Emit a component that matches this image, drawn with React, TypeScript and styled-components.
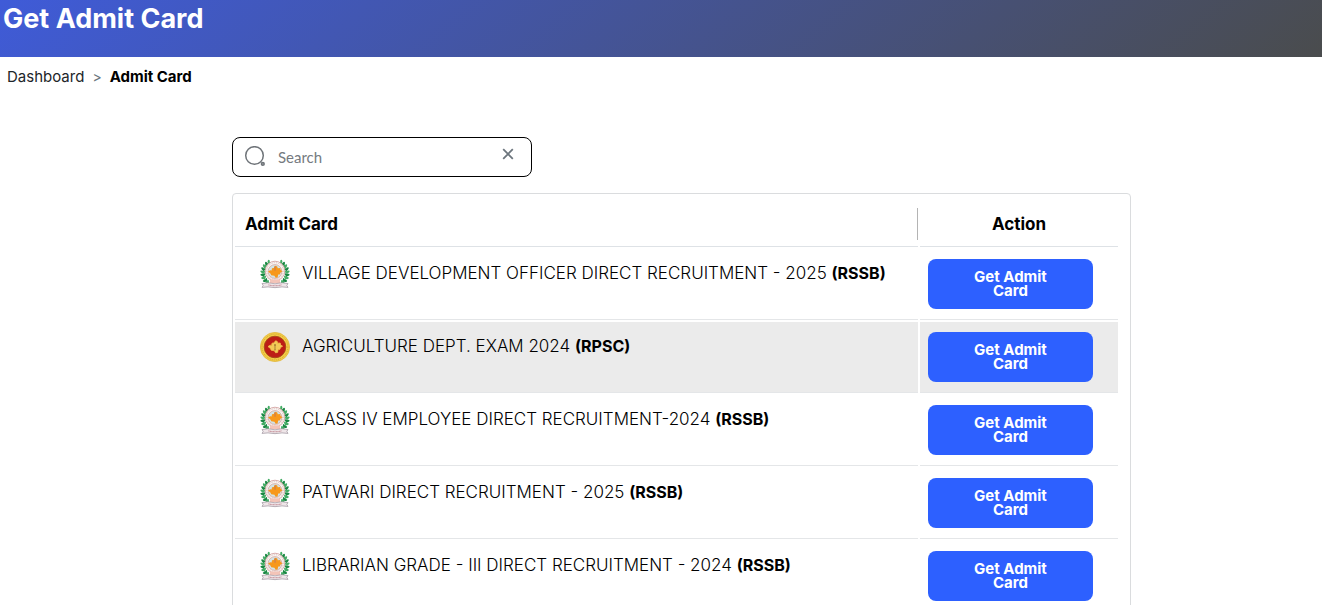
import React, { useState } from "react";
import styled, { createGlobalStyle } from "styled-components";

const GlobalStyle = createGlobalStyle`
  *, *::before, *::after { box-sizing: border-box; }
  html { scrollbar-width: none; }
  body {
    margin: 0;
    background: #fff;
    color: #000;
    font-family: Inter, "Open Sans", sans-serif;
    font-size: 17px;
  }
`;

const Banner = styled.header`
  height: 57px;
  padding: 4px 3px;
  background: linear-gradient(140deg, #3f5bd8 0%, #4a4c4d 100%);
`;

const Title = styled.h1`
  margin: 0;
  color: #fff;
  font-size: 27px;
  line-height: 30px;
  font-weight: 700;
`;

const Breadcrumb = styled.nav`
  display: flex;
  align-items: center;
  gap: 8px;
  padding: 10px 7px;
  font-size: 15px;
  line-height: 20px;
`;

const CrumbLink = styled.a`
  color: #212529;
  text-decoration: none;
`;

const CrumbCurrent = styled.span`
  font-weight: 700;
`;

const CrumbSeparator = styled.span`
  color: #6c757d;
  font-size: 14px;
`;

const Main = styled.main`
  width: 68%;
  margin: 40px 0 0 232px;
`;

const SearchBox = styled.label`
  display: flex;
  align-items: center;
  gap: 8px;
  width: 300px;
  height: 40px;
  padding: 0 12px 0 11px;
  border: 1px solid #000;
  border-radius: 8px;
`;

const SearchInput = styled.input`
  flex: 1;
  min-width: 0;
  padding: 0 4px;
  border: 0;
  outline: 0;
  background: transparent;
  color: #212529;
  font-family: Lato, sans-serif;
  font-size: 15px;
  &::placeholder { color: #757a80; opacity: 1; }
`;

const ClearButton = styled.button`
  display: flex;
  padding: 5px;
  margin-bottom: 7px;
  border: 0;
  background: none;
  color: #6c757d;
  cursor: pointer;
`;

const Panel = styled.section`
  margin-top: 16px;
  padding-right: 10px;
  border: 1px solid #dadcde;
  border-radius: 4px;
`;

const Table = styled.table`
  width: 100%;
  border-collapse: separate;
  border-spacing: 2px;
`;

const HeadCell = styled.th<{ $action?: boolean }>`
  width: ${(p) => (p.$action ? "198px" : "auto")};
  padding: ${(p) => (p.$action ? "12px 0 6px" : "12px 0 6px 10px")};
  border-bottom: 1px solid #dee2e6;
  text-align: ${(p) => (p.$action ? "center" : "left")};
  font-weight: 700;
`;

const HeadLabel = styled.div<{ $divided?: boolean }>`
  line-height: 32px;
  border-right: ${(p) => (p.$divided ? "1px solid #b4b4b4" : "0")};
`;

const Row = styled.tr<{ $highlighted?: boolean }>`
  background: ${(p) => (p.$highlighted ? "#ebebeb" : "transparent")};
`;

const Cell = styled.td<{ $action?: boolean }>`
  height: 71px;
  padding: ${(p) => (p.$action ? "10px 8px" : "10px 25px")};
  border-bottom: 1px solid #e4e6e8;
  vertical-align: top;
`;

const Exam = styled.div`
  display: flex;
  gap: 12px;
  font-weight: 300;
  line-height: 28px;
`;

const Board = styled.b`
  font-size: 16px;
  font-weight: 700;
`;

const GetButton = styled.button`
  display: block;
  width: 165px;
  height: 50px;
  padding: 0 32px;
  border: 0;
  border-radius: 8px;
  background: #2d60ff;
  color: #fff;
  font-family: inherit;
  font-size: 15px;
  line-height: 14px;
  font-weight: 700;
  cursor: pointer;
`;

const SearchIcon = () => (
  <svg width="22" height="22" viewBox="0 0 22 22" fill="none" stroke="#6f7479" strokeWidth="1.5" aria-hidden="true">
    <circle cx="10.5" cy="9.5" r="8.8" />
    <circle cx="18.8" cy="17.9" r="1.4" fill="#a5a8ab" />
  </svg>
);

const CloseIcon = () => (
  <svg width="12" height="12" viewBox="0 0 12 12" stroke="currentColor" strokeWidth="1.8" aria-hidden="true">
    <path d="M1.2 1.2 10.8 10.8M10.8 1.2 1.2 10.8" />
  </svg>
);

const STATE_MAP =
  "M8 14.6 10.2 13.2 11.6 13.4 12 11.2 13.8 11 15.6 8.8 17.2 9.4 17.8 11.2 20.2 11 20.6 13 22.6 14.2 20.6 15.4 19.8 17.4 18.2 17.6 17.6 20.4 15.6 20.8 14.4 18.8 11.2 18.2 10.4 16.4Z";

const leaves = Array.from({ length: 9 }, (_, i) => {
  const degrees = 122 + i * 14;
  const angle = (degrees * Math.PI) / 180;
  return { x: 15 + 12 * Math.cos(angle), y: 14 - 12 * Math.sin(angle), turn: 90 - degrees };
});

const BoardEmblem = () => (
  <svg width="30" height="30" viewBox="0 0 30 30" role="img" aria-label="RSSB emblem">
    {[false, true].map((flip) => (
      <g key={String(flip)} transform={flip ? "matrix(-1 0 0 1 30 0)" : undefined}>
        <path d="M9 3.6A12 12 0 0 0 9 24.4" fill="none" stroke="#2c9a50" strokeWidth="1" />
        {leaves.map((l, i) => (
          <g key={i} transform={`translate(${l.x} ${l.y}) rotate(${l.turn})`} fill={i % 2 ? "#188642" : "#42ad64"}>
            <ellipse cx="0" cy="-1.1" rx="1.1" ry="1.9" transform="rotate(35)" />
            <ellipse cx="0" cy="1.1" rx="1" ry="1.8" transform="rotate(-35)" />
          </g>
        ))}
      </g>
    ))}
    <circle cx="15" cy="12" r="9.8" fill="#fbf6f4" stroke="#cf9c9a" strokeWidth="0.8" />
    <circle cx="15" cy="12" r="8.3" fill="none" stroke="#d2b5b3" strokeWidth="0.9" strokeDasharray="1 0.9" />
    <circle cx="15" cy="12.5" r="6.9" fill="#d3e4e5" stroke="#d5928a" strokeWidth="0.6" />
    <path d={STATE_MAP} fill="#f7981b" transform="translate(0 -2)" />
    <path d="M14.2 7.2h1.7v4.6h-1.7z" fill="#d9853f" />
    <path d="M10 20.5h10v3.6h-10z" fill="#f3c4b8" />
    <path d="M2 24.6 8 23.7Q15 25.9 22 23.7L28 24.6 26.8 26.4 28 28.4 22 27.9Q15 29.4 8 27.9L2 28.4 3.2 26.4Z" fill="#efe6e9" stroke="#9c929c" strokeWidth="0.7" />
    <path d="M8.5 25.9Q15 27.6 21.5 25.9" fill="none" stroke="#b97983" strokeWidth="1" strokeDasharray="1 0.5" />
  </svg>
);

const CommissionEmblem = () => (
  <svg width="30" height="30" viewBox="0 0 30 30" role="img" aria-label="RPSC emblem">
    <circle cx="15" cy="15" r="14.6" fill="#f2cc45" stroke="#dfb235" strokeWidth="0.7" />
    <circle cx="15" cy="15" r="12.9" fill="none" stroke="#cb9c36" strokeWidth="1" strokeDasharray="0.8 1.2" />
    <circle cx="15" cy="15" r="10.8" fill="#bd1d16" stroke="#a6481b" strokeWidth="0.9" />
    <path d={STATE_MAP} fill="#f3ca57" stroke="#f0c04a" strokeWidth="0.8" />
    <path d="M14.2 12.2h1.6v1.4l-.4.5v3.2l.6 1h-2l.6-1v-3.2l-.4-.5z" fill="#97702c" />
  </svg>
);

const exams = [
  { name: "VILLAGE DEVELOPMENT OFFICER DIRECT RECRUITMENT - 2025", board: "RSSB" },
  { name: "AGRICULTURE DEPT. EXAM 2024", board: "RPSC", highlighted: true },
  { name: "CLASS IV EMPLOYEE DIRECT RECRUITMENT-2024", board: "RSSB" },
  { name: "PATWARI DIRECT RECRUITMENT - 2025", board: "RSSB" },
  { name: "LIBRARIAN GRADE - III DIRECT RECRUITMENT - 2024", board: "RSSB" },
];

export default function App() {
  const [query, setQuery] = useState("");
  const visible = exams.filter((e) => `${e.name} ${e.board}`.toLowerCase().includes(query.toLowerCase()));

  return (
    <>
      <GlobalStyle />
      <Banner>
        <Title>Get Admit Card</Title>
      </Banner>
      <Breadcrumb aria-label="Breadcrumb">
        <CrumbLink href="#dashboard">Dashboard</CrumbLink>
        <CrumbSeparator>&gt;</CrumbSeparator>
        <CrumbCurrent>Admit Card</CrumbCurrent>
      </Breadcrumb>
      <Main>
        <SearchBox>
          <SearchIcon />
          <SearchInput
            type="text"
            placeholder="Search"
            aria-label="Search"
            value={query}
            onChange={(e) => setQuery(e.target.value)}
          />
          <ClearButton type="button" aria-label="Clear search" onClick={() => setQuery("")}>
            <CloseIcon />
          </ClearButton>
        </SearchBox>
        <Panel>
          <Table>
            <thead>
              <tr>
                <HeadCell scope="col">
                  <HeadLabel $divided>Admit Card</HeadLabel>
                </HeadCell>
                <HeadCell scope="col" $action>
                  <HeadLabel>Action</HeadLabel>
                </HeadCell>
              </tr>
            </thead>
            <tbody>
              {visible.map((exam) => (
                <Row key={exam.name} $highlighted={exam.highlighted}>
                  <Cell>
                    <Exam>
                      {exam.board === "RPSC" ? <CommissionEmblem /> : <BoardEmblem />}
                      <span>
                        {exam.name} <Board>({exam.board})</Board>
                      </span>
                    </Exam>
                  </Cell>
                  <Cell $action>
                    <GetButton type="button">Get Admit Card</GetButton>
                  </Cell>
                </Row>
              ))}
            </tbody>
          </Table>
        </Panel>
      </Main>
    </>
  );
}
